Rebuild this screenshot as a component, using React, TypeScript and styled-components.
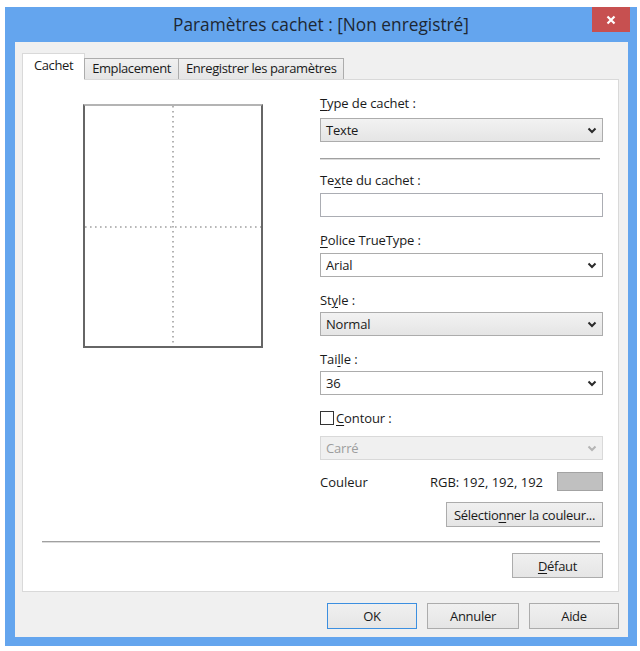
import React from "react";
import styled, { createGlobalStyle } from "styled-components";

const Global = createGlobalStyle`
  html, body { margin: 0; padding: 0; background: #fff; }
  body { font-family: "Open Sans", "Noto Sans", sans-serif; color: #1a1a1a; }
  * { box-sizing: border-box; }
`;

const Window = styled.div`
  margin: 7px 0 0 5px;
  width: 632px;
  height: 639px;
  background: #64a5ee;
  display: flex;
  flex-direction: column;
`;

const TitleBar = styled.div`
  height: 35px;
  flex: none;
  display: grid;
  grid-template-columns: 1fr auto 1fr;
  align-items: start;
`;

const Title = styled.div`
  grid-column: 2;
  font-size: 17.3px;
  line-height: 36px;
  color: #1d2733;
  white-space: nowrap;
`;

const CloseButton = styled.div`
  grid-column: 3;
  justify-self: end;
  margin-right: 7px;
  width: 38px;
  height: 25px;
  background: #c75050;
  display: flex;
  align-items: center;
  justify-content: center;
`;

const Body = styled.div`
  flex: 1;
  margin: 0 9px 9px 10px;
  background: #f0f0f0;
  padding: 11px 9px 8px 7px;
  display: flex;
  flex-direction: column;
`;

const TabRow = styled.div`
  height: 26px;
  display: flex;
  align-items: flex-end;
  position: relative;
  z-index: 1;
`;

const Tab = styled.div<{ $active?: boolean }>`
  height: ${(p) => (p.$active ? 27 : 21)}px;
  margin-bottom: ${(p) => (p.$active ? -1 : 0)}px;
  margin-left: ${(p) => (p.$active ? 0 : -1)}px;
  padding: ${(p) => (p.$active ? "3px 11px 0 11px" : "1px 7px 0 7px")};
  border: 1px solid ${(p) => (p.$active ? "#d9d9d9" : "#acacac")};
  border-bottom: none;
  background: ${(p) => (p.$active ? "#fff" : "linear-gradient(#f0f0f0, #e5e5e5)")};
  font-size: 13px;
  line-height: 17px;
  letter-spacing: -0.4px;
  white-space: nowrap;
`;

const Panel = styled.div`
  flex: 1;
  border: 1px solid #d9d9d9;
  background: #fff;
  padding: 0 15px 13px 0;
  display: flex;
  flex-direction: column;
`;

const Content = styled.div`
  display: flex;
  align-items: flex-start;
`;

const Preview = styled.div`
  margin: 24px 0 0 60px;
  width: 180px;
  height: 244px;
  flex: none;
  border: 2px solid #666;
  border-top-color: #b4b4b4;
  background: #fff;
  display: flex;
`;

const Controls = styled.div`
  margin-left: 57px;
  width: 283px;
  padding-top: 15px;
  display: flex;
  flex-direction: column;
`;

const Label = styled.div<{ $mt?: number; $mb?: number }>`
  margin-top: ${(p) => p.$mt ?? 0}px;
  margin-bottom: ${(p) => p.$mb ?? 5}px;
  font-size: 13px;
  line-height: 16px;
  letter-spacing: -0.1px;
  white-space: nowrap;
`;

const Key = styled.span`
  text-decoration: underline;
  text-underline-offset: 2px;
`;

type Variant = "list" | "edit" | "disabled";

const Combo = styled.div<{ $variant: Variant }>`
  height: 24px;
  border: 1px solid ${(p) => (p.$variant === "disabled" ? "#d9d9d9" : "#acacac")};
  background: ${(p) =>
    p.$variant === "list"
      ? "linear-gradient(#f2f2f2, #e5e5e5)"
      : p.$variant === "edit"
      ? "#fff"
      : "#f0f0f0"};
  color: ${(p) => (p.$variant === "disabled" ? "#9d9d9d" : "#1a1a1a")};
  display: flex;
  align-items: center;
  justify-content: space-between;
  padding: 0 5px 0 5px;
  font-size: 13px;
  letter-spacing: -0.2px;
`;

const TextInput = styled.div`
  height: 24px;
  border: 1px solid #abadb3;
  background: #fff;
`;

const Etched = styled.div<{ $mt: number; $ml?: number; $mr?: number }>`
  margin: ${(p) => p.$mt}px ${(p) => p.$mr ?? 0}px 0 ${(p) => p.$ml ?? 0}px;
  height: 2px;
  border-top: 1px solid #a0a0a0;
  border-bottom: 1px solid #dcdcdc;
`;

const CheckRow = styled.div`
  margin-top: 15px;
  height: 16px;
  display: flex;
  align-items: center;
  gap: 2px;
  font-size: 13px;
  letter-spacing: -0.1px;
`;

const CheckBox = styled.div`
  width: 14px;
  height: 14px;
  border: 1px solid #333;
  background: #fff;
`;

const ColorRow = styled.div`
  margin-top: 12px;
  height: 19px;
  display: flex;
  align-items: center;
  font-size: 13px;
`;

const Grow = styled.div`
  flex: 1;
`;

const RgbText = styled.span`
  margin-right: 14px;
`;

const Swatch = styled.div`
  width: 46px;
  height: 19px;
  border: 1px solid #a3a3a3;
  background: #c0c0c0;
`;

const Button = styled.div<{ $w: number; $h?: number; $default?: boolean }>`
  width: ${(p) => p.$w}px;
  height: ${(p) => p.$h ?? 25}px;
  border: 1px solid ${(p) => (p.$default ? "#3c8fe0" : "#acacac")};
  background: linear-gradient(#f0f0f0, #e5e5e5);
  display: flex;
  align-items: center;
  justify-content: center;
  font-size: 13px;
  letter-spacing: -0.3px;
  white-space: nowrap;
  flex: none;
`;

const ColorButtonRow = styled.div`
  margin-top: 11px;
  display: flex;
  justify-content: flex-end;
`;

const DefaultRow = styled.div`
  margin-top: 10px;
  display: flex;
  justify-content: flex-end;
`;

const Footer = styled.div`
  margin-top: 11px;
  display: flex;
  justify-content: flex-end;
  gap: 10px;
`;

const Chevron = ({ disabled }: { disabled?: boolean }) => (
  <svg width="10" height="7" viewBox="0 0 10 7">
    <path
      d="M1.5 1.5 L5 5 L8.5 1.5"
      fill="none"
      stroke={disabled ? "#b5b5b5" : "#2a2a2a"}
      strokeWidth="2"
    />
  </svg>
);

const Field = ({
  label,
  mt,
  mb,
  children,
}: {
  label: React.ReactNode;
  mt?: number;
  mb?: number;
  children: React.ReactNode;
}) => (
  <>
    <Label $mt={mt} $mb={mb}>
      {label}
    </Label>
    {children}
  </>
);

export default function App() {
  return (
    <>
      <Global />
      <Window>
        <TitleBar>
          <Title>Paramètres cachet : [Non enregistré]</Title>
          <CloseButton>
            <svg width="10" height="10" viewBox="0 0 10 10">
              <path d="M1.5 1.5 L8.5 8.5 M8.5 1.5 L1.5 8.5" stroke="#fff" strokeWidth="2.2" />
            </svg>
          </CloseButton>
        </TitleBar>
        <Body>
          <TabRow>
            <Tab $active>Cachet</Tab>
            <Tab>Emplacement</Tab>
            <Tab>Enregistrer les paramètres</Tab>
          </TabRow>
          <Panel>
            <Content>
              <Preview>
                <svg width="176" height="240" viewBox="0 0 176 240">
                  <line x1="88" y1="0" x2="88" y2="240" stroke="#a0a0a0" strokeWidth="1.6" strokeDasharray="1.6 3.4" />
                  <line x1="0" y1="121" x2="176" y2="121" stroke="#a0a0a0" strokeWidth="1.6" strokeDasharray="1.6 3.4" />
                </svg>
              </Preview>
              <Controls>
                <Field label={<><Key>T</Key>ype de cachet :</>} mb={7}>
                  <Combo $variant="list">
                    <span>Texte</span>
                    <Chevron />
                  </Combo>
                </Field>
                <Etched $mt={16} $mr={3} />
                <Field label={<>Te<Key>x</Key>te du cachet :</>} mt={12}>
                  <TextInput />
                </Field>
                <Field label={<><Key>P</Key>olice TrueType :</>} mt={15}>
                  <Combo $variant="edit">
                    <span>Arial</span>
                    <Chevron />
                  </Combo>
                </Field>
                <Field label={<>St<Key>y</Key>le :</>} mt={15} mb={4}>
                  <Combo $variant="list">
                    <span>Normal</span>
                    <Chevron />
                  </Combo>
                </Field>
                <Field label={<>Tai<Key>l</Key>le :</>} mt={15} mb={4}>
                  <Combo $variant="edit">
                    <span>36</span>
                    <Chevron />
                  </Combo>
                </Field>
                <CheckRow>
                  <CheckBox />
                  <span>
                    <Key>C</Key>ontour :
                  </span>
                </CheckRow>
                <Combo $variant="disabled" style={{ marginTop: 10 }}>
                  <span>Carré</span>
                  <Chevron disabled />
                </Combo>
                <ColorRow>
                  <span>Couleur</span>
                  <Grow />
                  <RgbText>RGB: 192, 192, 192</RgbText>
                  <Swatch />
                </ColorRow>
                <ColorButtonRow>
                  <Button $w={157}>
                    Sélectio<Key>n</Key>ner la couleur...
                  </Button>
                </ColorButtonRow>
              </Controls>
            </Content>
            <Etched $mt={14} $ml={19} $mr={3} />
            <DefaultRow>
              <Button $w={91}>
                <Key>D</Key>éfaut
              </Button>
            </DefaultRow>
          </Panel>
          <Footer>
            <Button $w={90} $h={26} $default>
              OK
            </Button>
            <Button $w={92} $h={26}>
              Annuler
            </Button>
            <Button $w={90} $h={26}>
              Aide
            </Button>
          </Footer>
        </Body>
      </Window>
    </>
  );
}
